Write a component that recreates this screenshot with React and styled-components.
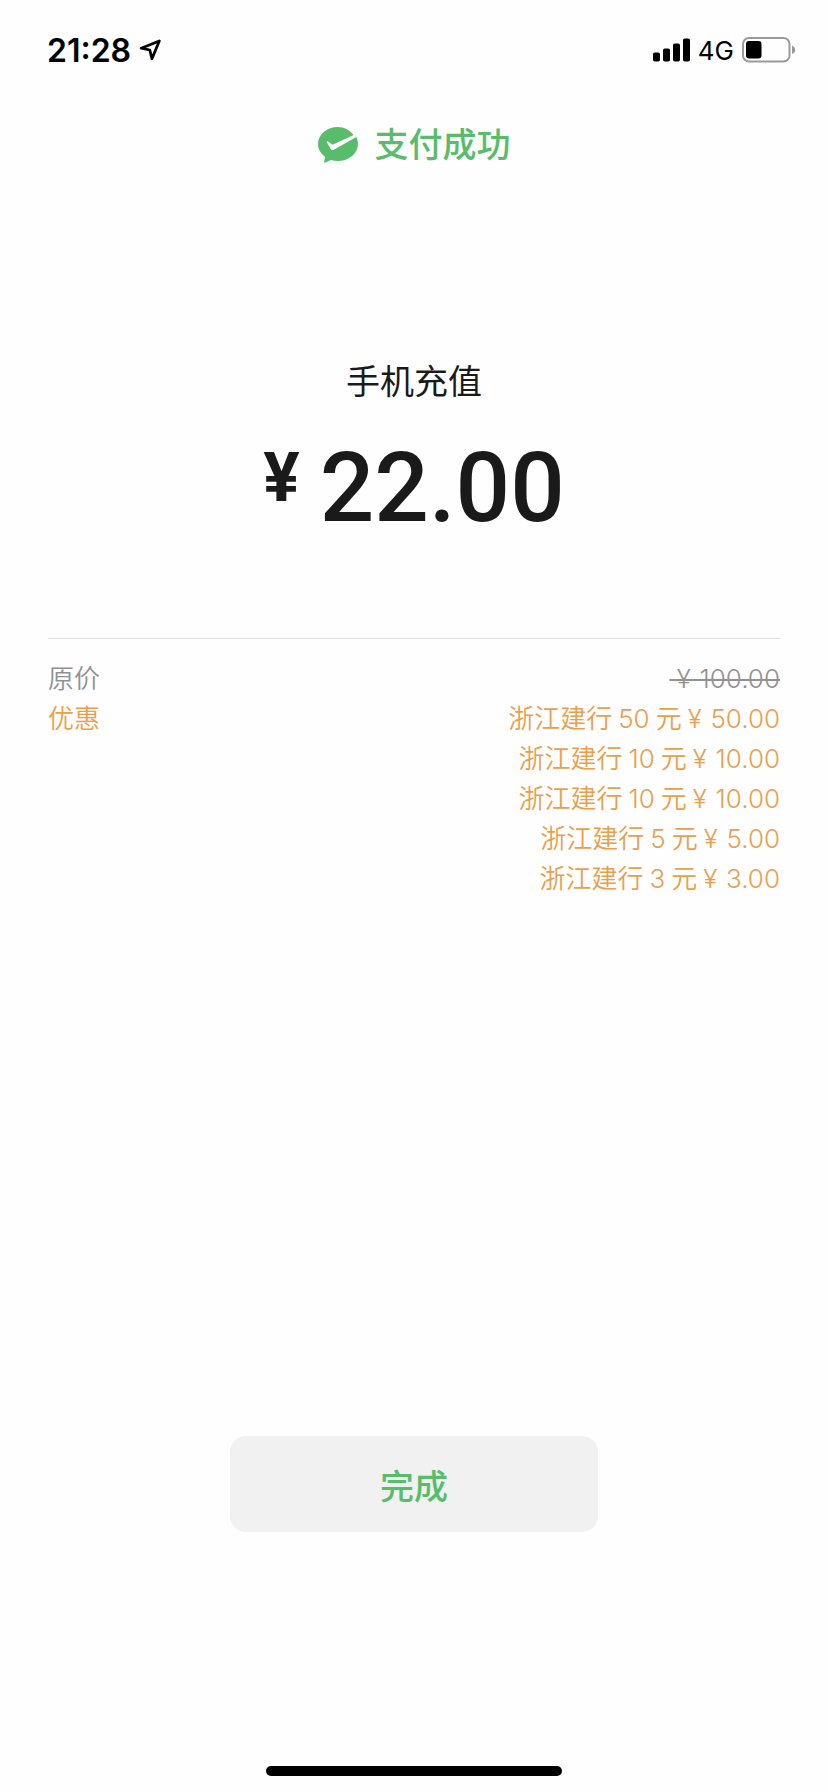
import React from "react";
import styled, { createGlobalStyle } from "styled-components";

const discounts = [
  { id: 1, bank: "浙江建行", face: 50, value: "50.00" },
  { id: 2, bank: "浙江建行", face: 10, value: "10.00" },
  { id: 3, bank: "浙江建行", face: 10, value: "10.00" },
  { id: 4, bank: "浙江建行", face: 5, value: "5.00" },
  { id: 5, bank: "浙江建行", face: 3, value: "3.00" },
];

const formatPrice = (value) => `¥\u2004${value}`;

export default function App() {
  return (
    <>
      <GlobalStyle />
      <Page>
        <StatusBar>
          <StatusGroup $gap="8px">
            <Clock>21:28</Clock>
            <LocationIcon />
          </StatusGroup>
          <StatusGroup $gap="8px">
            <SignalIcon />
            <Network>4G</Network>
            <BatteryIcon />
          </StatusGroup>
        </StatusBar>

        <Result>
          <PayIcon />
          支付成功
        </Result>

        <Summary>
          <Merchant>手机充值</Merchant>
          <Amount>
            <Currency>¥</Currency>
            22.00
          </Amount>
        </Summary>

        <Details>
          <Term>原价</Term>
          <Values>
            <OldPrice>{`\u00a0${formatPrice("100.00")}`}</OldPrice>
          </Values>
          <Term $discount>优惠</Term>
          <Values $discount>
            {discounts.map(({ id, bank, face, value }) => (
              <Discount key={id}>
                <span>{bank}</span>
                <span>{face}</span>
                <span>元</span>
                <span>{formatPrice(value)}</span>
              </Discount>
            ))}
          </Values>
        </Details>

        <DoneButton type="button">完成</DoneButton>
        <HomeIndicator />
      </Page>
    </>
  );
}

function LocationIcon() {
  return (
    <svg width="22" height="22" viewBox="0 0 22 22" aria-hidden="true">
      <path
        d="M20.3 2 2.2 9.200 10.800 11 13 19.800Z"
        fill="none"
        stroke="#000"
        strokeWidth="2.8"
        strokeLinejoin="round"
      />
    </svg>
  );
}

function SignalIcon() {
  return (
    <svg width="37" height="24" viewBox="0 0 37 24" aria-hidden="true">
      <rect x="0" y="14.5" width="7" height="9" rx="1.8" />
      <rect x="10" y="10.5" width="7" height="13" rx="1.8" />
      <rect x="20" y="5.5" width="7" height="18" rx="1.8" />
      <rect x="30" y="0.5" width="7" height="23" rx="1.8" />
    </svg>
  );
}

function BatteryIcon() {
  return (
    <svg width="54" height="26" viewBox="0 0 54 26" aria-hidden="true">
      <rect
        x="1"
        y="1"
        width="46.5"
        height="23.5"
        rx="6"
        fill="none"
        stroke="#9a9a9a"
        strokeWidth="2"
      />
      <rect x="4" y="4" width="15.5" height="17.5" rx="3.2" />
      <path d="M50 8.5c2 .7 3.2 2.3 3.2 4.3s-1.200 3.600-3.200 4.300z" fill="#9a9a9a" />
    </svg>
  );
}

function PayIcon() {
  return (
    <svg width="41" height="36" viewBox="0 0 41 36" aria-hidden="true">
      <path
        d="M20 0C9 0 0 7.5 0 17c0 5.200 2.800 9.800 7.200 12.900L6.200 34.600c-.2 1 .5 1.500 1.300 1L13 32.900c2.200.7 4.500 1.100 7 1.100 11 0 20-7.600 20-17 0-2.500-.6-4.800-1.700-7L15.800 22.800c-1.300.6-2.400.4-3-.9L8.900 15.400c-.4-.9.4-1.500 1.200-1L13.900 17.200c.6.4 1.200.4 1.800.1L35.600 8C31.900 3.100 26.300 0 20 0z"
        fill="#58bd6b"
      />
    </svg>
  );
}

const GlobalStyle = createGlobalStyle`
  * {
    box-sizing: border-box;
  }

  body {
    margin: 0;
    background: #fefefe;
    font-family: Inter, "Noto Sans CJK SC", sans-serif;
  }
`;

const Page = styled.main`
  display: flex;
  flex-direction: column;
  min-height: 100vh;
  padding: 0 48px 16px;
  color: #1a1a1a;
`;

const StatusBar = styled.header`
  display: flex;
  align-items: center;
  justify-content: space-between;
  height: 100px;
  margin: 0 -16px 0 -1px;
  color: #000;
`;

const StatusGroup = styled.div`
  display: flex;
  align-items: center;
  gap: ${({ $gap }) => $gap};
`;

const Clock = styled.span`
  font-size: 32px;
  font-weight: 600;
`;

const Network = styled.span`
  font-size: 26px;
  font-weight: 400;
`;

const Result = styled.h1`
  display: flex;
  align-items: center;
  justify-content: center;
  gap: 16px;
  margin: 20px 0 0;
  color: #58bd6b;
  font-size: 34px;
  font-weight: 500;
  line-height: 50px;
`;

const Summary = styled.section`
  display: flex;
  flex-direction: column;
  align-items: center;
  margin-top: 188px;
  padding-bottom: 100px;
  border-bottom: 1px solid #dedede;
`;

const Merchant = styled.h2`
  margin: 0;
  font-size: 34px;
  font-weight: 400;
  line-height: 48px;
`;

const Amount = styled.p`
  display: flex;
  align-items: flex-start;
  gap: 20px;
  margin: 32px 0 0;
  font-family: Roboto, sans-serif;
  font-size: 96px;
  font-weight: 500;
  line-height: 100px;
`;

const Currency = styled.span`
  font-size: 68px;
  font-weight: 700;
  line-height: 80px;
`;

const Details = styled.dl`
  display: grid;
  grid-template-columns: auto 1fr;
  margin: 20px 0 0;
  font-size: 26px;
  line-height: 40px;
`;

const Term = styled.dt`
  color: ${({ $discount }) => ($discount ? "#e8a04e" : "#919191")};
  font-weight: 350;
`;

const Values = styled.dd`
  display: flex;
  flex-direction: column;
  align-items: flex-end;
  margin: 0;
  color: ${({ $discount }) => ($discount ? "#e8a04e" : "#919191")};
  font-weight: 350;
`;

const OldPrice = styled.del`
  text-decoration-thickness: 2px;
`;

const Discount = styled.div`
  display: flex;
  gap: 6px;
`;

const DoneButton = styled.button`
  align-self: center;
  width: 368px;
  height: 96px;
  margin-top: auto;
  margin-bottom: 234px;
  border: 0;
  border-radius: 16px;
  background: #f1f1f1;
  color: #58bd6b;
  font-family: inherit;
  font-size: 34px;
  font-weight: 500;
`;

const HomeIndicator = styled.div`
  align-self: center;
  width: 296px;
  height: 10px;
  border-radius: 5px;
  background: #000;
`;
